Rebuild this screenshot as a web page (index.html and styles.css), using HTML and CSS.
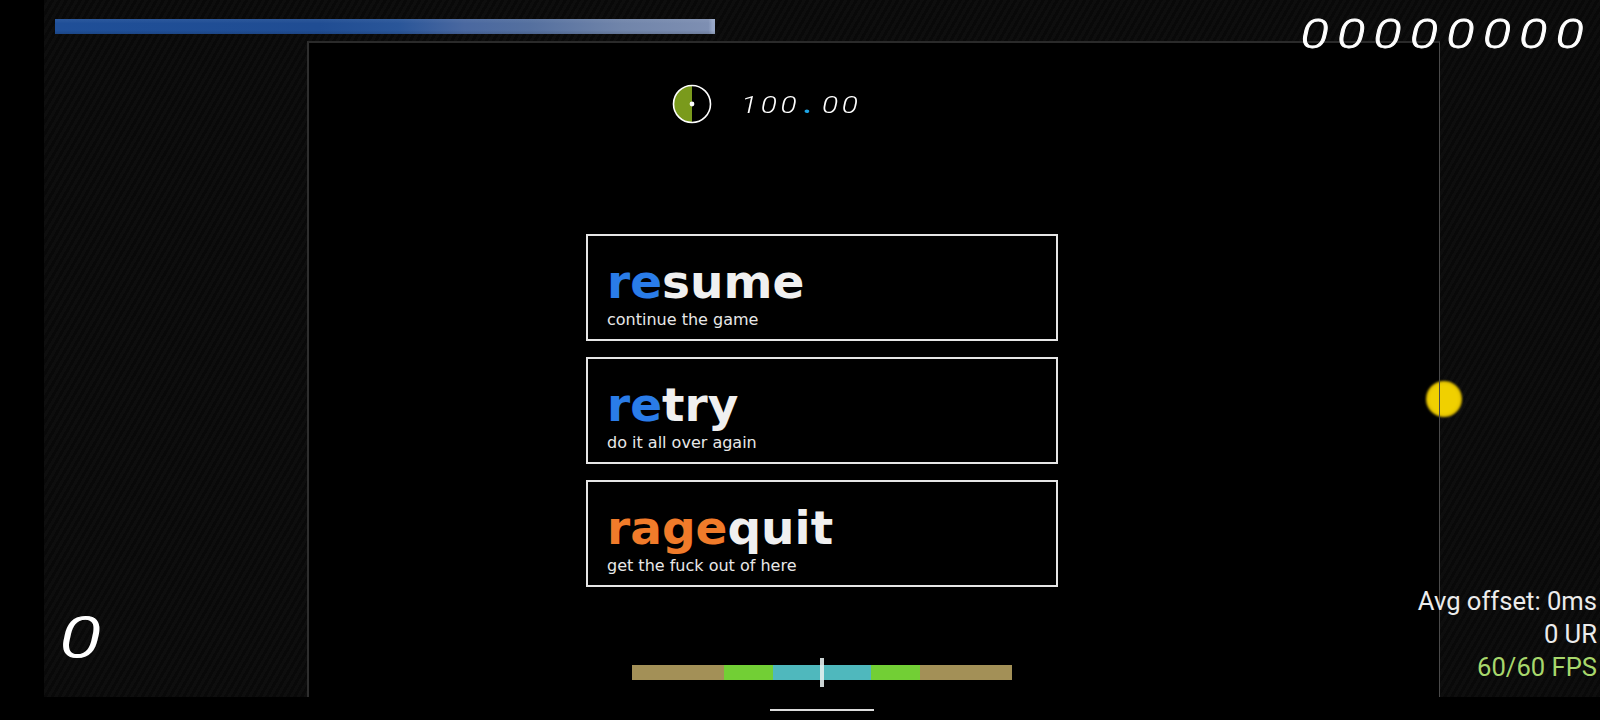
FILE: index.html
```html
<!DOCTYPE html>
<html lang="en">
<head>
<meta charset="utf-8">
<title>Paused</title>
<link rel="stylesheet" href="styles.css">
</head>
<body>
<div class="screen">
  <div class="notch"></div>
  <div class="app">
    <div class="field">
      <div class="progress"></div>
      <div class="playfield"></div>
      <div class="cursor"></div>
      <div class="hud">
        <div class="score">00000000</div>
        <div class="acc">
          <svg class="pie" width="40" height="40" viewBox="0 0 40 40">
            <path d="M20 1.5 A18.5 18.5 0 0 0 20 38.5 Z" fill="#7a9a1c"/>
            <circle cx="20" cy="20" r="18.5" fill="none" stroke="#ffffff" stroke-width="1.6"/>
            <circle cx="20" cy="20" r="2.4" fill="#ffffff"/>
          </svg>
          <span class="acc-text">100<span class="acc-dot">.</span>00</span>
        </div>
        <div class="combo">0</div>
        <div class="stats">
          <div class="stat">Avg offset: 0ms</div>
          <div class="stat">0 UR</div>
          <div class="stat fps">60/60 FPS</div>
        </div>
        <div class="hiterr">
          <div class="seg meh"></div>
          <div class="seg good"></div>
          <div class="seg great"></div>
          <div class="seg good"></div>
          <div class="seg meh"></div>
          <div class="marker"></div>
        </div>
      </div>
      <div class="pause">
        <div class="btn">
          <div class="btn-title"><span class="hl-blue">re</span>sume</div>
          <div class="btn-sub">continue the game</div>
        </div>
        <div class="btn">
          <div class="btn-title"><span class="hl-blue">re</span>try</div>
          <div class="btn-sub">do it all over again</div>
        </div>
        <div class="btn">
          <div class="btn-title"><span class="hl-orange">rage</span>quit</div>
          <div class="btn-sub">get the fuck out of here</div>
        </div>
      </div>
    </div>
    <div class="navbar"><div class="handle"></div></div>
  </div>
</div>
</body>
</html>
```

FILE: styles.css
```css
* { box-sizing: border-box; }
html, body { margin: 0; padding: 0; background: #000; }
body { width: 1600px; height: 720px; overflow: hidden; font-family: "DejaVu Sans", sans-serif; }

.screen { display: flex; width: 1600px; height: 720px; }
.notch { width: 44px; flex: none; background: #000; }
.app { flex: 1; display: flex; flex-direction: column; }

.field {
  position: relative;
  height: 697px;
  display: flex;
  flex-direction: column;
  padding: 19px 0 0 11px;
  background: repeating-linear-gradient(120deg, #090909 0 3px, #0e0e0e 3px 6px);
}

.progress {
  width: 660px;
  height: 15px;
  flex: none;
  background:
    linear-gradient(180deg, rgba(255,255,255,0.06) 0, rgba(255,255,255,0) 30%, rgba(0,0,0,0) 75%, rgba(0,0,0,0.12) 100%),
    linear-gradient(90deg, #1f4f98 0%, #204d93 40%, #2a5699 52%, #4a68a0 62%, #55709f 72%, #7185aa 86%, #7e8fb2 99%, #98a8c8 99.6%);
}

.playfield {
  position: relative;
  margin: 7px 0 0 252px;
  width: 1133px;
  flex: 1;
  background: #000;
}
.playfield::after {
  content: "";
  position: absolute;
  inset: 0 0 0 0;
  border-top: 2px solid #2a2a2a;
  border-left: 2px solid #2e2e2e;
  border-right: 1px solid #4a4a4a;
  z-index: 3;
}

.cursor {
  position: absolute;
  left: 1382px;
  top: 381px;
  width: 36px;
  height: 36px;
  border-radius: 50%;
  background: radial-gradient(circle, #f0d000 0 55%, #d8b600 72%, rgba(190,160,0,0.2) 100%);
  filter: blur(1.2px);
  z-index: 2;
}

.hud { position: absolute; inset: 0; z-index: 4; pointer-events: none; }

.score {
  position: absolute;
  right: 8px;
  top: 15px;
  font-family: "Roboto", sans-serif;
  font-weight: 300;
  font-style: italic;
  font-size: 40px;
  line-height: 1;
  letter-spacing: 6.5px;
  color: #fff;
  -webkit-text-stroke: 0.8px #fff;
  transform: scaleX(1.3);
  transform-origin: right center;
}

.acc {
  position: absolute;
  left: 628px;
  top: 84px;
  display: flex;
  align-items: center;
  gap: 29px;
}
.pie { display: block; }
.acc-text {
  display: inline-block;
  font-family: "Roboto", sans-serif;
  font-weight: 300;
  font-style: italic;
  font-size: 23px;
  line-height: 1;
  letter-spacing: 2.8px;
  color: #fff;
  padding-top: 2px;
  transform: scaleX(1.3);
  transform-origin: left center;
}
.acc-dot { color: #1ea6e6; font-weight: 700; margin: 0 4.5px 0 3px; }

.combo {
  position: absolute;
  left: 16px;
  top: 611px;
  font-family: "Roboto", sans-serif;
  font-weight: 300;
  font-style: italic;
  font-size: 55px;
  line-height: 1;
  color: #fff;
  -webkit-text-stroke: 1.2px #fff;
  transform: scaleX(1.38);
  transform-origin: left center;
}

.stats {
  position: absolute;
  right: 3px;
  bottom: 13px;
  text-align: right;
  font-family: "Roboto", sans-serif;
  font-size: 25.6px;
  line-height: 33px;
  color: #ececec;
}
.fps { color: #a8d86c; }

.hiterr {
  position: absolute;
  left: 50%;
  top: 665px;
  transform: translateX(-50%);
  display: flex;
  height: 15px;
}
.seg { height: 15px; }
.seg.meh { width: 92px; background: #a39057; }
.seg.good { width: 49px; background: #72cf35; }
.seg.great { width: 98px; background: #4fb8bd; }
.marker {
  position: absolute;
  left: 188px;
  top: -7px;
  width: 4px;
  height: 29px;
  background: rgba(230,240,240,0.88);
}

.pause {
  position: absolute;
  inset: 0;
  z-index: 5;
  display: flex;
  flex-direction: column;
  align-items: center;
  padding-top: 234px;
  gap: 16px;
}
.btn {
  width: 472px;
  height: 107px;
  border: 2px solid #e6e6e6;
  background: #000;
  padding: 22px 0 0 19px;
}
.btn-title {
  font-family: "DejaVu Sans", sans-serif;
  font-weight: bold;
  font-size: 47px;
  line-height: 1;
  color: #f0f0f0;
  white-space: nowrap;
}
.hl-blue { color: #2a7ce8; }
.hl-orange { color: #f07b2a; }
.btn-sub {
  margin-top: 7px;
  font-family: "DejaVu Sans", sans-serif;
  font-size: 16px;
  line-height: 1;
  color: #e8e8e8;
  white-space: nowrap;
}

.navbar {
  flex: 1;
  background: #000;
  display: flex;
  justify-content: center;
  padding-top: 12px;
}
.handle { width: 104px; height: 2px; background: #dcdcdc; }
```
